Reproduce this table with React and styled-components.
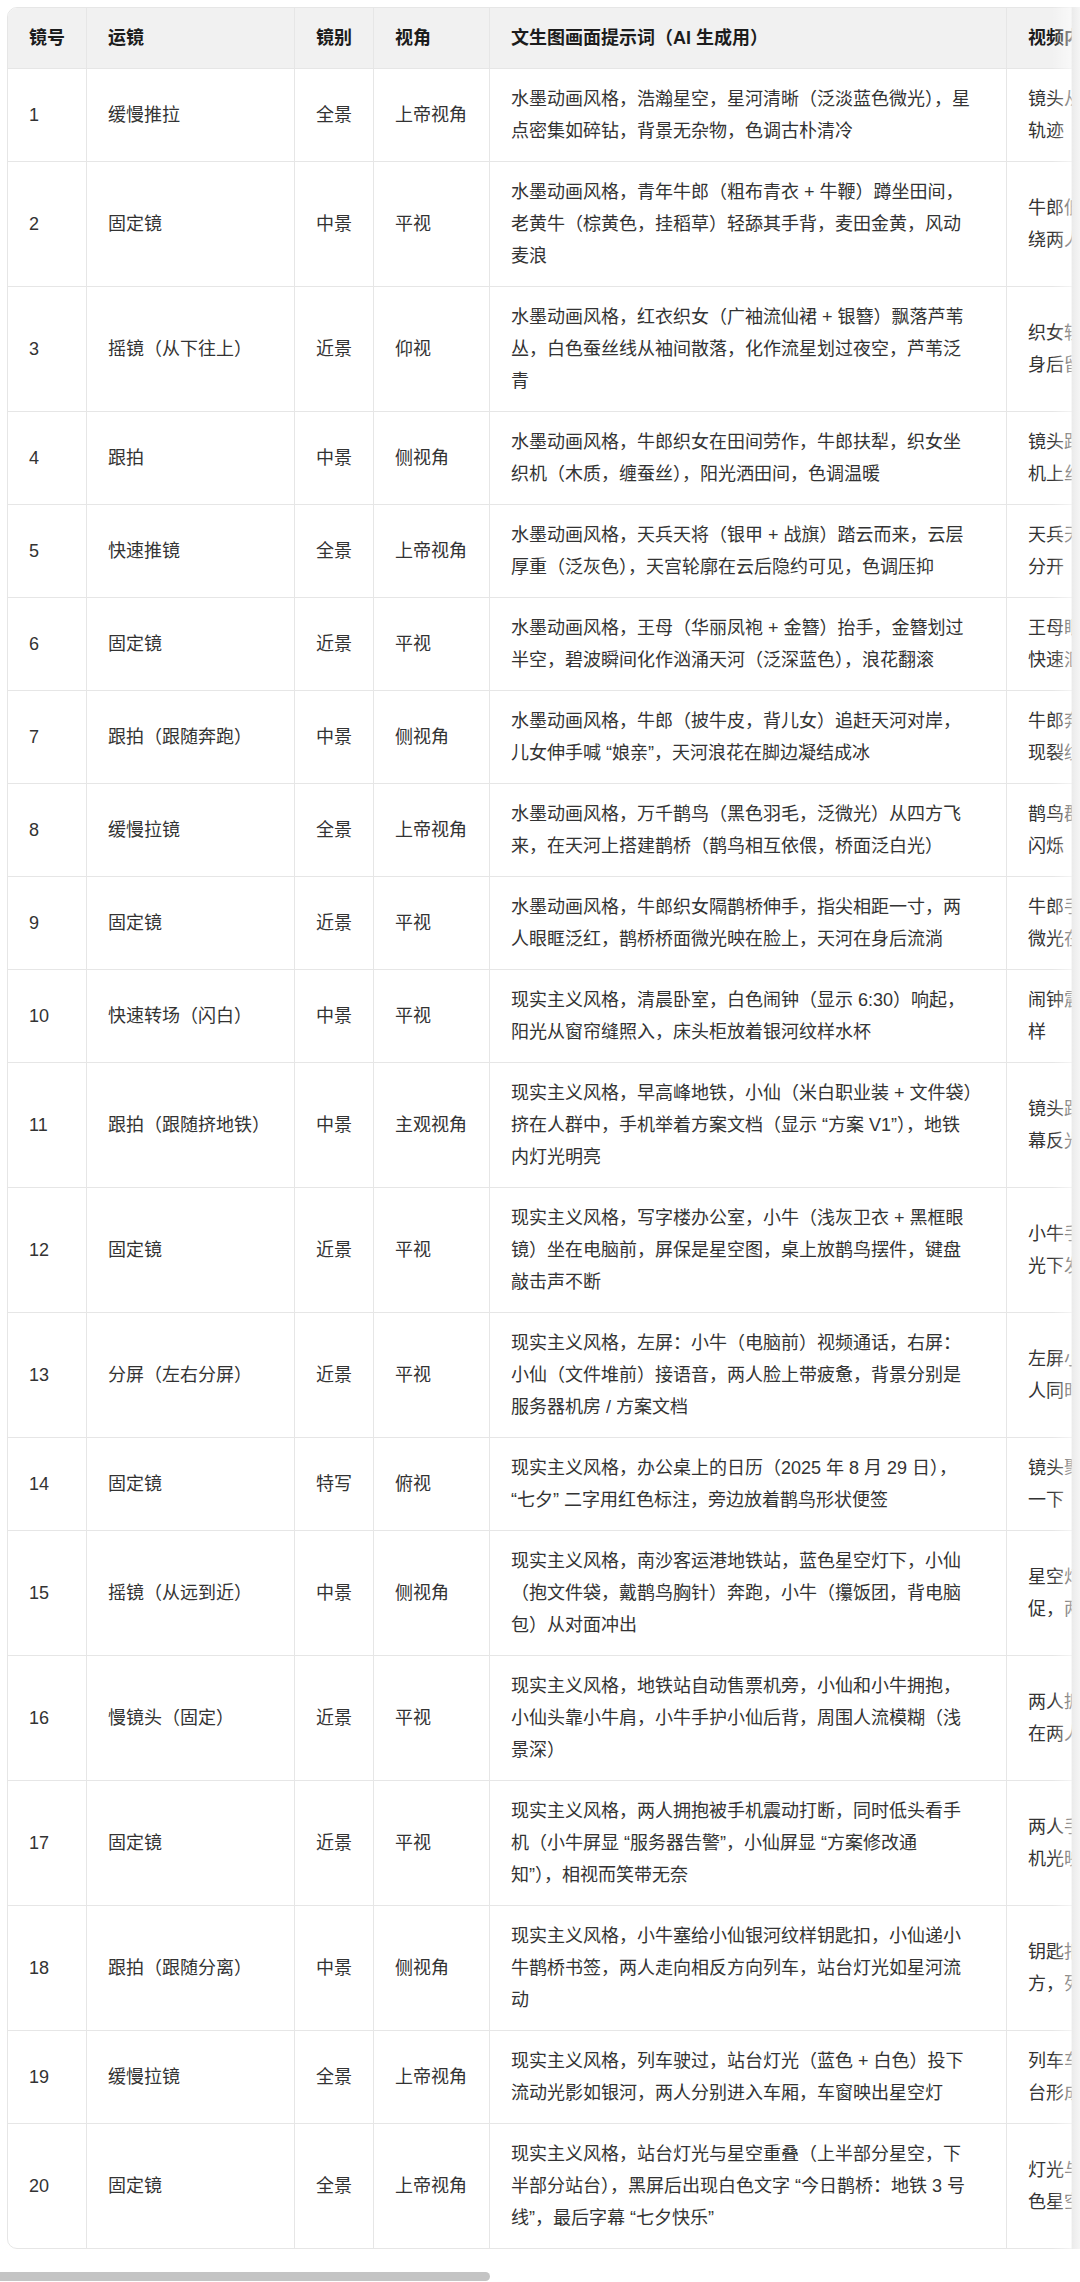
import React from 'react';
import styled, { createGlobalStyle } from 'styled-components';

const GlobalStyle = createGlobalStyle`
  * { box-sizing: border-box; }
  html, body { margin: 0; padding: 0; background: #fff; }
  body {
    font-family: "Liberation Sans", "Noto Sans CJK SC", sans-serif;
    color: #333;
  }
`;

const Page = styled.div`
  width: 1080px;
  overflow: hidden;
`;

// horizontally scrolled area, parked at scrollLeft 0
const Viewport = styled.div`
  position: relative;
  overflow: hidden;
  padding: 7px 0 0 7px;
`;

const Frame = styled.div`
  width: 2366px;
  border: 1px solid #e6e6e6;
  border-radius: 10px;
  overflow: hidden;
`;

const Table = styled.table`
  width: 100%;
  border-collapse: separate;
  border-spacing: 0;
  table-layout: fixed;
  font-size: 18px;
  line-height: 32px;
`;

const Head = styled.th`
  width: ${p => p.$w}px;
  padding: 14px 21px;
  background: #f1f1f1;
  color: #1c1c1c;
  font-weight: 600;
  text-align: left;
  white-space: nowrap;
  border-right: 1px solid #e6e6e6;
  border-bottom: 1px solid #e6e6e6;
  &:last-child { border-right: none; }
`;

const Cell = styled.td`
  padding: 14px 21px;
  vertical-align: middle;
  color: #333;
  border-right: 1px solid #e6e6e6;
  border-bottom: 1px solid #e6e6e6;
  &:last-child { border-right: none; }
  tr:last-child > & { border-bottom: none; }
`;

const Line = styled.span`
  display: block;
  white-space: nowrap;
`;

// fade + edge shadow where the table runs off screen
const EdgeShade = styled.div`
  position: absolute;
  top: 7px;
  right: 0;
  bottom: 0;
  width: 28px;
  pointer-events: none;
  background: linear-gradient(
    to right,
    rgba(255, 255, 255, 0) 0%,
    rgba(255, 255, 255, 0.55) 68%,
    #ebebeb 72%,
    #f5f5f5 100%
  );
`;

const ScrollTrack = styled.div`
  margin-top: 23px;
  height: 9px;
`;

const ScrollThumb = styled.div`
  width: 490px;
  height: 100%;
  background: #c4c4c4;
  border-radius: 0 5px 5px 0;
`;

const columns = [
  { title: '镜号', w: 79 },
  { title: '运镜', w: 208 },
  { title: '镜别', w: 79 },
  { title: '视角', w: 116 },
  { title: '文生图画面提示词（AI 生成用）', w: 517 },
  { title: '视频内容描述', w: 600 },
  { title: '时长', w: 120 },
  { title: '音效 / 配乐', w: 645 },
];

const shots = [
  ['缓慢推拉', '全景', '上帝视角',
    ['水墨动画风格，浩瀚星空，星河清晰（泛淡蓝色微光），星', '点密集如碎钻，背景无杂物，色调古朴清冷'],
    ['镜头从星空顶部缓缓推近，星点闪烁，星河流动形成银色', '轨迹'], '4s', '空灵古筝'],
  ['固定镜', '中景', '平视',
    ['水墨动画风格，青年牛郎（粗布青衣 + 牛鞭）蹲坐田间，', '老黄牛（棕黄色，挂稻草）轻舔其手背，麦田金黄，风动', '麦浪'],
    ['牛郎低头抚摸老黄牛，老牛轻舔其手背，麦浪随风起伏，环', '绕两人'], '4s', '风声、牛铃'],
  ['摇镜（从下往上）', '近景', '仰视',
    ['水墨动画风格，红衣织女（广袖流仙裙 + 银簪）飘落芦苇', '丛，白色蚕丝线从袖间散落，化作流星划过夜空，芦苇泛', '青'],
    ['织女轻盈飘落芦苇丛，蚕丝线从袖间散落化作流星划过，', '身后留下淡淡光痕'], '4s', '笛声'],
  ['跟拍', '中景', '侧视角',
    ['水墨动画风格，牛郎织女在田间劳作，牛郎扶犁，织女坐', '织机（木质，缠蚕丝），阳光洒田间，色调温暖'],
    ['镜头跟随牛郎扶犁前行，转向织女穿梭织布，蚕丝在织', '机上丝丝缠绕'], '4s', '织机声'],
  ['快速推镜', '全景', '上帝视角',
    ['水墨动画风格，天兵天将（银甲 + 战旗）踏云而来，云层', '厚重（泛灰色），天宫轮廓在云后隐约可见，色调压抑'],
    ['天兵天将踏云而来，云层翻涌，天宫若隐若现，牛郎织女被', '分开'], '3s', '鼓点'],
  ['固定镜', '近景', '平视',
    ['水墨动画风格，王母（华丽凤袍 + 金簪）抬手，金簪划过', '半空，碧波瞬间化作汹涌天河（泛深蓝色），浪花翻滚'],
    ['王母眼神冷厉，拔下金簪划过半空，碧波翻涌成天河，', '快速汇聚阻隔两人'], '3s', '浪涛声'],
  ['跟拍（跟随奔跑）', '中景', '侧视角',
    ['水墨动画风格，牛郎（披牛皮，背儿女）追赶天河对岸，', '儿女伸手喊 “娘亲”，天河浪花在脚边凝结成冰'],
    ['牛郎奔跑追赶，儿女伸手呼喊，浪花在脚边凝结，冰面出', '现裂纹'], '4s', '哭喊声'],
  ['缓慢拉镜', '全景', '上帝视角',
    ['水墨动画风格，万千鹊鸟（黑色羽毛，泛微光）从四方飞', '来，在天河上搭建鹊桥（鹊鸟相互依偎，桥面泛白光）'],
    ['鹊鸟群从四方飞来，首尾相衔搭成鹊桥，羽毛微光点点', '闪烁'], '4s', '鸟鸣'],
  ['固定镜', '近景', '平视',
    ['水墨动画风格，牛郎织女隔鹊桥伸手，指尖相距一寸，两', '人眼眶泛红，鹊桥桥面微光映在脸上，天河在身后流淌'],
    ['牛郎手指缓缓靠近织女指尖，两人眼眶泛红，鹊桥桥面', '微光在脸上流转'], '4s', '古筝'],
  ['快速转场（闪白）', '中景', '平视',
    ['现实主义风格，清晨卧室，白色闹钟（显示 6:30）响起，', '阳光从窗帘缝照入，床头柜放着银河纹样水杯'],
    ['闹钟震动响起，画面闪白转场至现实，床头水杯银河纹', '样'], '2s', '闹钟铃声'],
  ['跟拍（跟随挤地铁）', '中景', '主观视角',
    ['现实主义风格，早高峰地铁，小仙（米白职业装 + 文件袋）', '挤在人群中，手机举着方案文档（显示 “方案 V1”），地铁', '内灯光明亮'],
    ['镜头跟随小仙挤进地铁车厢，手机举在胸前，方案文档屏', '幕反光'], '4s', '地铁报站'],
  ['固定镜', '近景', '平视',
    ['现实主义风格，写字楼办公室，小牛（浅灰卫衣 + 黑框眼', '镜）坐在电脑前，屏保是星空图，桌上放鹊鸟摆件，键盘', '敲击声不断'],
    ['小牛手指快速敲击键盘，屏保星空缓缓流动，摆件在灯', '光下发亮'], '4s', '键盘声'],
  ['分屏（左右分屏）', '近景', '平视',
    ['现实主义风格，左屏：小牛（电脑前）视频通话，右屏：', '小仙（文件堆前）接语音，两人脸上带疲惫，背景分别是', '服务器机房 / 方案文档'],
    ['左屏小牛揉眼看代码，右屏小仙翻阅文件接语音，两', '人同时叹气'], '4s', '叹气声'],
  ['固定镜', '特写', '俯视',
    ['现实主义风格，办公桌上的日历（2025 年 8 月 29 日），', '“七夕” 二字用红色标注，旁边放着鹊鸟形状便签'],
    ['镜头聚焦日历上的 “七夕” 二字，鹊鸟便签被风吹动', '一下'], '3s', '钟表滴答'],
  ['摇镜（从远到近）', '中景', '侧视角',
    ['现实主义风格，南沙客运港地铁站，蓝色星空灯下，小仙', '（抱文件袋，戴鹊鸟胸针）奔跑，小牛（攥饭团，背电脑', '包）从对面冲出'],
    ['星空灯下两人从两端奔向对方，脚步急', '促，两人越来越近'], '4s', '脚步声'],
  ['慢镜头（固定）', '近景', '平视',
    ['现实主义风格，地铁站自动售票机旁，小仙和小牛拥抱，', '小仙头靠小牛肩，小牛手护小仙后背，周围人流模糊（浅', '景深）'],
    ['两人拥抱，周围人流虚化成光斑，时间仿佛静止，星光落', '在两人肩头'], '5s', '钢琴'],
  ['固定镜', '近景', '平视',
    ['现实主义风格，两人拥抱被手机震动打断，同时低头看手', '机（小牛屏显 “服务器告警”，小仙屏显 “方案修改通', '知”），相视而笑带无奈'],
    ['两人手机同时震动，低头看屏幕后相视一笑，手', '机光映在脸上'], '4s', '手机震动'],
  ['跟拍（跟随分离）', '中景', '侧视角',
    ['现实主义风格，小牛塞给小仙银河纹样钥匙扣，小仙递小', '牛鹊桥书签，两人走向相反方向列车，站台灯光如星河流', '动'],
    ['钥匙扣与书签交换后，两人转身走向相反方向，回望对', '方，列车进站'], '4s', '列车进站'],
  ['缓慢拉镜', '全景', '上帝视角',
    ['现实主义风格，列车驶过，站台灯光（蓝色 + 白色）投下', '流动光影如银河，两人分别进入车厢，车窗映出星空灯'],
    ['列车车窗灯光连成一线，流动光影铺满站', '台形成银河'], '4s', '列车驶离'],
  ['固定镜', '全景', '上帝视角',
    ['现实主义风格，站台灯光与星空重叠（上半部分星空，下', '半部分站台），黑屏后出现白色文字 “今日鹊桥：地铁 3 号', '线”，最后字幕 “七夕快乐”'],
    ['灯光与星空缓缓重叠，黑屏后浮现白字，最后字幕伴随蓝', '色星空淡出'], '5s', '主题曲'],
];

const Lines = ({ lines }) => lines.map((t, i) => <Line key={i}>{t}</Line>);

export default function App() {
  return (
    <Page>
      <GlobalStyle />
      <Viewport>
        <Frame>
          <Table>
            <thead>
              <tr>
                {columns.map(c => (
                  <Head key={c.title} $w={c.w}>{c.title}</Head>
                ))}
              </tr>
            </thead>
            <tbody>
              {shots.map(([move, size, angle, prompt, video, len, sound], i) => (
                <tr key={i}>
                  <Cell>{i + 1}</Cell>
                  <Cell>{move}</Cell>
                  <Cell>{size}</Cell>
                  <Cell>{angle}</Cell>
                  <Cell><Lines lines={prompt} /></Cell>
                  <Cell><Lines lines={video} /></Cell>
                  <Cell>{len}</Cell>
                  <Cell>{sound}</Cell>
                </tr>
              ))}
            </tbody>
          </Table>
        </Frame>
        <EdgeShade />
      </Viewport>
      <ScrollTrack>
        <ScrollThumb />
      </ScrollTrack>
    </Page>
  );
}
